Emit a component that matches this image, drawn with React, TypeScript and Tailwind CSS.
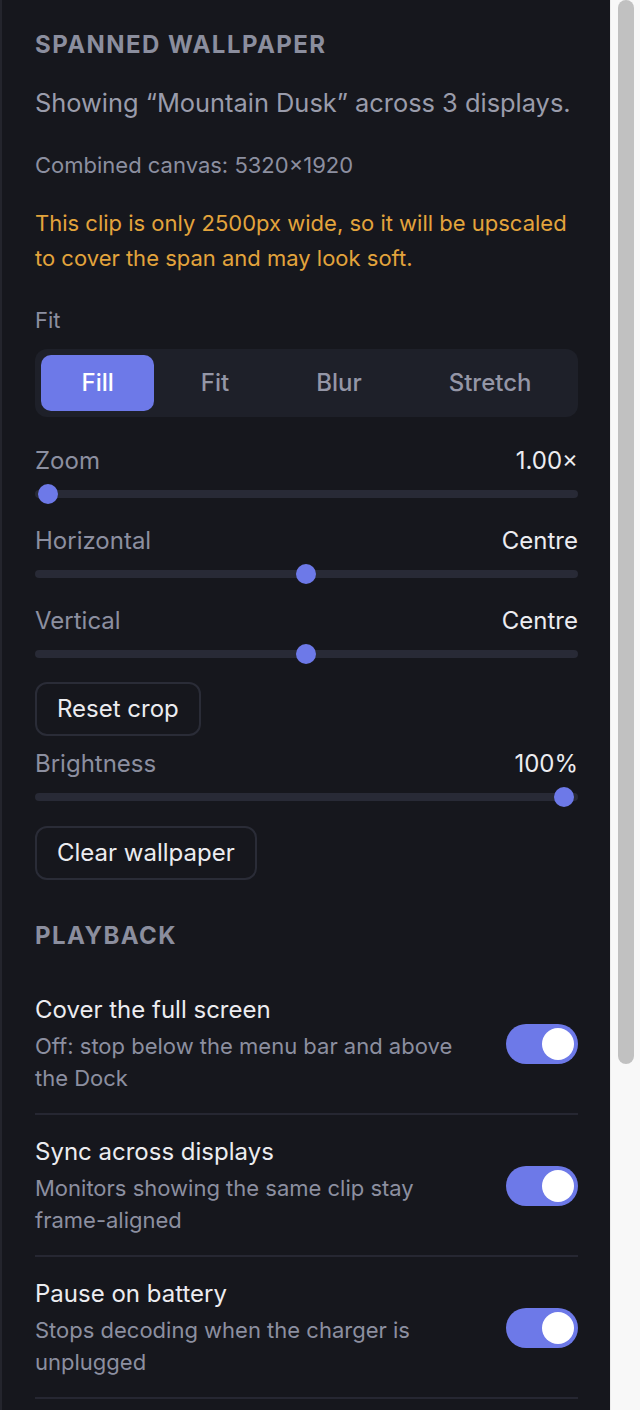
import React from 'react';

const FITS = ['Fill', 'Fit', 'Blur', 'Stretch'];

const SLIDERS = [
  { label: 'Zoom', value: '1.00×', pct: 0 },
  { label: 'Horizontal', value: 'Centre', pct: 50 },
  { label: 'Vertical', value: 'Centre', pct: 50 },
];

const TOGGLES = [
  { title: 'Cover the full screen', desc: 'Off: stop below the menu bar and above the Dock' },
  { title: 'Sync across displays', desc: 'Monitors showing the same clip stay frame-aligned' },
  { title: 'Pause on battery', desc: 'Stops decoding when the charger is unplugged' },
];

function Slider({ label, value, pct, className = '' }: { label: string; value: string; pct: number; className?: string }) {
  return (
    <div className={className}>
      <div className="flex h-7 items-center justify-between text-[24px] leading-7">
        <span className="text-[#8c8fa0]">{label}</span>
        <span className="text-[#ececf0]">{value}</span>
      </div>
      <div className="mt-[9px] flex h-5 items-center">
        <div className="relative h-2 w-full rounded-full bg-[#282a36]">
          <div className="absolute inset-y-0 left-[13px] right-[14px]">
            <span
              className="absolute top-1/2 h-5 w-5 -translate-x-1/2 -translate-y-1/2 rounded-full bg-[#6d79e8]"
              style={{ left: `${pct}%` }}
            />
          </div>
        </div>
      </div>
    </div>
  );
}

function OutlineButton({ children, className = '' }: { children: React.ReactNode; className?: string }) {
  return (
    <button className={`h-[54px] rounded-xl border-2 border-[#2a2c37] px-5 text-[24px] text-[#ececf0] ${className}`}>
      {children}
    </button>
  );
}

function Toggle() {
  return (
    <span className="flex h-10 w-[72px] shrink-0 items-center justify-end rounded-full bg-[#6d79e8] pr-1">
      <span className="h-8 w-8 rounded-full bg-white" />
    </span>
  );
}

export default function App() {
  return (
    <div className="flex h-[1410px] w-[640px] overflow-hidden bg-[#16171d] font-['Inter','Liberation_Sans',sans-serif]">
      <div className="w-[610px] border-l-2 border-[#24252d] pl-[33px] pr-8 pt-[31px]">
        {/* Spanned wallpaper */}
        <h2 className="text-[24px] font-bold uppercase leading-7 tracking-[0.06em] text-[#8b8e9e]">
          Spanned wallpaper
        </h2>
        <p className="mt-7 whitespace-nowrap text-[25.4px] leading-8 text-[#9a9cab]">
          Showing “Mountain Dusk” across 3 displays.
        </p>
        <p className="mt-8 text-[22px] leading-7 text-[#8c8fa0]">Combined canvas: 5320×1920</p>
        <p className="mt-[27px] text-[22px] leading-[35px] text-[#e3a43c]">
          This clip is only 2500px wide, so it will be upscaled to cover the span and may look soft.
        </p>

        <p className="mt-[30px] text-[22px] leading-7 text-[#8c8fa0]">Fit</p>
        <div className="mt-[15px] flex gap-1.5 rounded-xl bg-[#1e2029] p-1.5">
          {FITS.map((f, i) => (
            <button
              key={f}
              className={`h-14 flex-auto rounded-[10px] px-4 text-[24px] font-medium ${
                i === 0 ? 'bg-[#6d79e8] text-white' : 'text-[#9496a6]'
              }`}
            >
              {f}
            </button>
          ))}
        </div>

        <Slider {...SLIDERS[0]} className="mt-[30px]" />
        <Slider {...SLIDERS[1]} className="mt-[23px]" />
        <Slider {...SLIDERS[2]} className="mt-[23px]" />

        <OutlineButton className="mt-[18px]">Reset crop</OutlineButton>
        <Slider label="Brightness" value="100%" pct={100} className="mt-[14px]" />
        <OutlineButton className="mt-[19px]">Clear wallpaper</OutlineButton>

        {/* Playback */}
        <h2 className="mt-[42px] text-[24px] font-bold uppercase leading-7 tracking-[0.06em] text-[#8b8e9e]">
          Playback
        </h2>
        <div className="mt-[23px]">
          {TOGGLES.map((t) => (
            <div key={t.title} className="flex items-center gap-6 border-b-2 border-[#262732] pb-[19px] pt-[21px]">
              <div className="flex-1">
                <div className="text-[24px] leading-8 text-[#ececf0]">{t.title}</div>
                <div className="mt-1 text-[22px] leading-8 text-[#8c8fa0]">{t.desc}</div>
              </div>
              <Toggle />
            </div>
          ))}
        </div>
      </div>

      {/* scrollbar */}
      <div className="w-[30px] border-l border-[#ececec] bg-[#f8f8f8] pl-[7px]">
        <div className="h-[1064px] w-4 rounded-full bg-[#c1c1c1]" />
      </div>
    </div>
  );
}
